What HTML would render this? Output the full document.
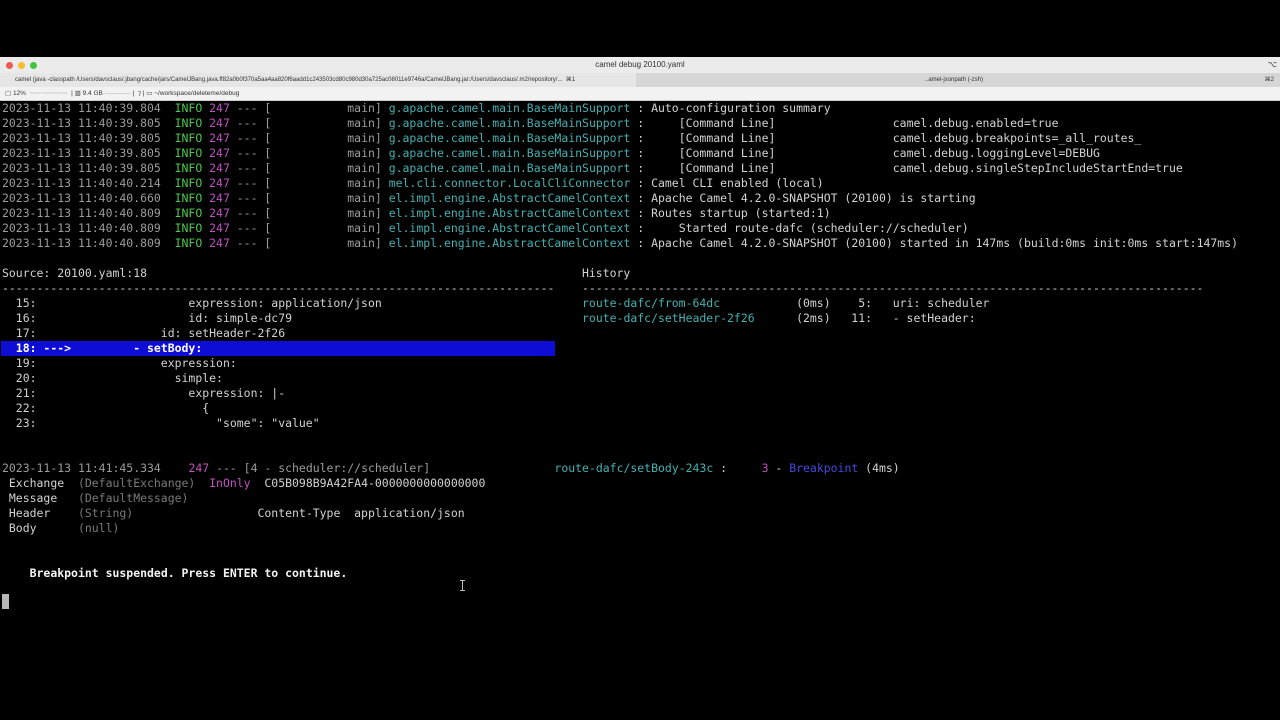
<!DOCTYPE html>
<html><head><meta charset="utf-8"><style>
*{margin:0;padding:0}
body{width:1280px;height:720px;background:#000;overflow:hidden;position:relative;font-family:"Liberation Sans",sans-serif}
.tb{position:absolute;left:0;top:57px;width:1280px;height:16px;background:#ebebeb;font-size:8px;color:#333;text-align:center;line-height:16px}
.dot{position:absolute;top:5px;width:7px;height:7px;border-radius:50%}
.tabs{position:absolute;left:0;top:73px;width:1280px;height:14px;background:#d6d6d6;font-size:6px;color:#333;line-height:14px}
.status{position:absolute;left:0;top:87px;width:1280px;height:13px;background:#f2f2f2;font-size:6.5px;color:#333;line-height:13px;border-bottom:1px solid #ccc}
pre{position:absolute;left:2px;top:101px;font-family:"DejaVu Sans Mono","Liberation Mono",monospace;font-size:11.48px;line-height:15px;color:#d2d2d2;white-space:pre}
.t{color:#9c9c9c}.g{color:#4cc84c}.m{color:#c050c0}.c{color:#45b0b0}.d{color:#7a7a7a}.b{font-weight:bold;color:#f4f4f4}.bl{color:#4848e0}
.hl{background:#0d0dd6;color:#fff;font-weight:bold;display:inline-block;width:553px;margin-left:-1px;padding-left:1px}
.cur{position:absolute;left:2px;top:594px;width:7px;height:15px;background:#b8b8b8}
</style></head><body>
<div class="tb">camel debug 20100.yaml
<div class="dot" style="left:6px;background:#ee5a52"></div><div class="dot" style="left:18px;background:#f5bd2f"></div><div class="dot" style="left:30px;background:#3fc43f"></div>
<span style="position:absolute;right:3px;top:0">⌥</span></div>
<div class="tabs"><div style="position:absolute;left:0;top:0;width:636px;height:14px;background:#e6e6e6"></div><span style="position:absolute;left:15px">camel (java -classpath /Users/davsclaus/.jbang/cache/jars/CamelJBang.java.ff82a0b0f370a5aa4aa820f6aadd1c243503cd80c980d30a725ac08011e9746a/CamelJBang.jar:/Users/davsclaus/.m2/repository/...&nbsp; ⌘1</span><span style="position:absolute;left:925px">..amel-jsonpath (-zsh)</span><span style="position:absolute;right:6px">⌘2</span></div>
<div class="status"><span style="position:absolute;left:5px">▢ 12% &nbsp;<span style="color:#999">~~~~~~~~~~</span> &nbsp;| ▥ 9.4 GB <span style="color:#aaa">————</span> | &nbsp;⁊ | ▭ ~/workspace/deleteme/debug</span></div>
<pre><span class="t">2023-11-13 11:40:39.804</span>  <span class="g">INFO</span> <span class="m">247</span> <span class="t">--- [           main]</span> <span class="c">g.apache.camel.main.BaseMainSupport</span> : Auto-configuration summary
<span class="t">2023-11-13 11:40:39.805</span>  <span class="g">INFO</span> <span class="m">247</span> <span class="t">--- [           main]</span> <span class="c">g.apache.camel.main.BaseMainSupport</span> :     [Command Line]                 camel.debug.enabled=true
<span class="t">2023-11-13 11:40:39.805</span>  <span class="g">INFO</span> <span class="m">247</span> <span class="t">--- [           main]</span> <span class="c">g.apache.camel.main.BaseMainSupport</span> :     [Command Line]                 camel.debug.breakpoints=_all_routes_
<span class="t">2023-11-13 11:40:39.805</span>  <span class="g">INFO</span> <span class="m">247</span> <span class="t">--- [           main]</span> <span class="c">g.apache.camel.main.BaseMainSupport</span> :     [Command Line]                 camel.debug.loggingLevel=DEBUG
<span class="t">2023-11-13 11:40:39.805</span>  <span class="g">INFO</span> <span class="m">247</span> <span class="t">--- [           main]</span> <span class="c">g.apache.camel.main.BaseMainSupport</span> :     [Command Line]                 camel.debug.singleStepIncludeStartEnd=true
<span class="t">2023-11-13 11:40:40.214</span>  <span class="g">INFO</span> <span class="m">247</span> <span class="t">--- [           main]</span> <span class="c">mel.cli.connector.LocalCliConnector</span> : Camel CLI enabled (local)
<span class="t">2023-11-13 11:40:40.660</span>  <span class="g">INFO</span> <span class="m">247</span> <span class="t">--- [           main]</span> <span class="c">el.impl.engine.AbstractCamelContext</span> : Apache Camel 4.2.0-SNAPSHOT (20100) is starting
<span class="t">2023-11-13 11:40:40.809</span>  <span class="g">INFO</span> <span class="m">247</span> <span class="t">--- [           main]</span> <span class="c">el.impl.engine.AbstractCamelContext</span> : Routes startup (started:1)
<span class="t">2023-11-13 11:40:40.809</span>  <span class="g">INFO</span> <span class="m">247</span> <span class="t">--- [           main]</span> <span class="c">el.impl.engine.AbstractCamelContext</span> :     Started route-dafc (scheduler://scheduler)
<span class="t">2023-11-13 11:40:40.809</span>  <span class="g">INFO</span> <span class="m">247</span> <span class="t">--- [           main]</span> <span class="c">el.impl.engine.AbstractCamelContext</span> : Apache Camel 4.2.0-SNAPSHOT (20100) started in 147ms (build:0ms init:0ms start:147ms)

Source: 20100.yaml:18                                                               History
--------------------------------------------------------------------------------    ------------------------------------------------------------------------------------------
  15:                      expression: application/json                             <span class="c">route-dafc/from-64dc</span>           (0ms)    5:   uri: scheduler
  16:                      id: simple-dc79                                          <span class="c">route-dafc/setHeader-2f26</span>      (2ms)   11:   - setHeader:
  17:                  id: setHeader-2f26
<span class="hl">  18: --->         - setBody:</span>
  19:                  expression:
  20:                    simple:
  21:                      expression: |-
  22:                        {
  23:                          "some": "value"


<span class="t">2023-11-13 11:41:45.334</span>    <span class="m">247</span> <span class="t">--- [4 - scheduler://scheduler]</span>                  <span class="c">route-dafc/setBody-243c</span> :     <span class="m">3</span> - <span class="bl">Breakpoint</span> (4ms)
 Exchange  <span class="d">(DefaultExchange)</span>  <span class="m">InOnly</span>  C05B098B9A42FA4-0000000000000000
 Message   <span class="d">(DefaultMessage)</span>
 Header    <span class="d">(String)</span>                  Content-Type  application/json
 Body      <span class="d">(null)</span>


    <span class="b">Breakpoint suspended. Press ENTER to continue.</span></pre>
<div class="cur"></div>
<div style="position:absolute;left:462px;top:580px;width:1px;height:11px;background:#bbb"></div>
<div style="position:absolute;left:460px;top:580px;width:5px;height:1px;background:#bbb"></div>
<div style="position:absolute;left:460px;top:590px;width:5px;height:1px;background:#bbb"></div>
</body></html>
